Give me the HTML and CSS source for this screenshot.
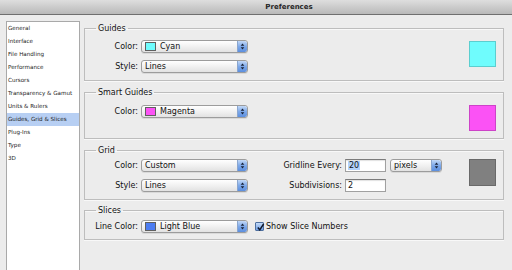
FILE: index.html
```html
<!DOCTYPE html>
<html>
<head>
<meta charset="utf-8">
<title>Preferences</title>
<link rel="stylesheet" href="styles.css">
</head>
<body>
<div class="window">
  <div class="titlebar"><span class="title">Preferences</span></div>
  <div class="main">
    <ul class="sidebar">
      <li>General</li>
      <li>Interface</li>
      <li>File Handling</li>
      <li>Performance</li>
      <li>Cursors</li>
      <li>Transparency &amp; Gamut</li>
      <li>Units &amp; Rulers</li>
      <li class="selected">Guides, Grid &amp; Slices</li>
      <li>Plug-Ins</li>
      <li>Type</li>
      <li>3D</li>
    </ul>
    <div class="content">
      <fieldset class="group g-guides">
        <legend>Guides</legend>
        <div class="body">
          <div class="fields two">
            <span class="lbl">Color:</span>
            <div class="popup"><span class="chip cyan"></span><span class="ptext">Cyan</span><span class="arrows"><svg viewBox="0 0 10 11"><path d="M3 4.6 L5 2.2 L7 4.6Z M3 6.4 L5 8.8 L7 6.4Z"/></svg></span></div>
            <span class="lbl">Style:</span>
            <div class="popup"><span class="ptext">Lines</span><span class="arrows"><svg viewBox="0 0 10 11"><path d="M3 4.6 L5 2.2 L7 4.6Z M3 6.4 L5 8.8 L7 6.4Z"/></svg></span></div>
          </div>
          <div class="swatch cyan sw-guides"></div>
        </div>
      </fieldset>

      <fieldset class="group g-smart">
        <legend>Smart Guides</legend>
        <div class="body">
          <div class="fields two">
            <span class="lbl">Color:</span>
            <div class="popup"><span class="chip magenta"></span><span class="ptext">Magenta</span><span class="arrows"><svg viewBox="0 0 10 11"><path d="M3 4.6 L5 2.2 L7 4.6Z M3 6.4 L5 8.8 L7 6.4Z"/></svg></span></div>
          </div>
          <div class="swatch magenta"></div>
        </div>
      </fieldset>

      <fieldset class="group g-grid">
        <legend>Grid</legend>
        <div class="body">
          <div class="fields five">
            <span class="lbl">Color:</span>
            <div class="popup"><span class="ptext">Custom</span><span class="arrows"><svg viewBox="0 0 10 11"><path d="M3 4.6 L5 2.2 L7 4.6Z M3 6.4 L5 8.8 L7 6.4Z"/></svg></span></div>
            <span class="lbl">Gridline Every:</span>
            <div class="field"><span class="sel">20</span></div>
            <div class="popup small"><span class="ptext">pixels</span><span class="arrows"><svg viewBox="0 0 10 11"><path d="M3 4.6 L5 2.2 L7 4.6Z M3 6.4 L5 8.8 L7 6.4Z"/></svg></span></div>
            <span class="lbl">Style:</span>
            <div class="popup"><span class="ptext">Lines</span><span class="arrows"><svg viewBox="0 0 10 11"><path d="M3 4.6 L5 2.2 L7 4.6Z M3 6.4 L5 8.8 L7 6.4Z"/></svg></span></div>
            <span class="lbl">Subdivisions:</span>
            <div class="field">2</div>
          </div>
          <div class="swatch gray"></div>
        </div>
      </fieldset>

      <fieldset class="group g-slices">
        <legend>Slices</legend>
        <div class="body">
          <div class="fields slices">
            <span class="lbl">Line Color:</span>
            <div class="popup"><span class="chip lightblue"></span><span class="ptext">Light Blue</span><span class="arrows"><svg viewBox="0 0 10 11"><path d="M3 4.6 L5 2.2 L7 4.6Z M3 6.4 L5 8.8 L7 6.4Z"/></svg></span></div>
            <label class="checkrow"><span class="check"><svg viewBox="0 0 9 9"><path d="M1.8 4.4 L3.8 6.8 L7.6 1" /></svg></span>Show Slice Numbers</label>
          </div>
        </div>
      </fieldset>
    </div>
  </div>
</div>
</body>
</html>
```
FILE: styles.css
```css
* { box-sizing: border-box; }
html, body { margin: 0; padding: 0; }
body {
  width: 512px;
  height: 270px;
  overflow: hidden;
  background: #ececec;
  font-family: "DejaVu Sans", "Liberation Sans", sans-serif;
  font-size: 8px;
  color: #111;
}
.window {
  height: 270px;
  display: flex;
  flex-direction: column;
}
.titlebar {
  height: 15px;
  flex: none;
  background: linear-gradient(#dedede, #b9b9b9);
  border-bottom: 1px solid #6f6f6f;
  padding-left: 66px;
  text-align: center;
  line-height: 14px;
}
.title {
  font-weight: bold;
  font-size: 7px;
  color: #262626;
}
.main {
  flex: 1;
  display: flex;
  align-items: stretch;
}
.sidebar {
  list-style: none;
  margin: 6px 0 -4px 6px;
  padding: 0;
  width: 74px;
  background: #fff;
  border: 1px solid #a9a9a9;
  font-size: 5.6px;
  color: #222;
}
.sidebar li {
  height: 13px;
  line-height: 13px;
  padding-left: 1px;
  white-space: nowrap;
}
.sidebar li.selected { background: #b7cff3; }
.content {
  margin-left: 4px;
  width: 420px;
  padding-top: 8px;
}
.group {
  margin: 0;
  min-width: 0;
  border: 1px solid #bdbdbd;
  box-shadow: 0 1px 0 #f8f8f8, inset 0 1px 0 #f8f8f8;
  padding: 0 7px 7px 0;
}
.group legend {
  margin-left: 11px;
  padding: 0 2px;
  font-size: 8px;
  line-height: 11px;
  color: #111;
}
.g-guides { padding-top: 6px; }
.g-smart { margin-top: 6px; padding-top: 7px; }
.g-grid { margin-top: 6px; padding-top: 3px; }
.g-slices { margin-top: 5px; padding-top: 4px; padding-bottom: 6px; }
.body {
  display: flex;
  align-items: flex-start;
}
.fields {
  display: grid;
  column-gap: 3px;
  row-gap: 7px;
  align-items: center;
}
.fields.two { grid-template-columns: 53px 107px; }
.fields.five { grid-template-columns: 53px 107px 91px 41px 53px; }
.fields.slices { grid-template-columns: 53px 107px auto; }
.lbl {
  text-align: right;
  white-space: nowrap;
  line-height: 13px;
}
.popup {
  height: 13px;
  display: flex;
  align-items: center;
  border: 1px solid #9c9c9c;
  border-radius: 3px;
  background: linear-gradient(#ffffff, #f1f1f1 50%, #e2e2e2);
  box-shadow: 0 1px 0 rgba(0,0,0,0.08);
  padding-left: 3px;
  overflow: hidden;
  white-space: nowrap;
}
.fields.five .popup.small { margin-left: 1px; }
.ptext { line-height: 11px; }
.chip {
  width: 11px;
  height: 9px;
  border: 1px solid #5f5f5f;
  margin-right: 4px;
  flex: none;
}
.arrows {
  margin-left: auto;
  width: 10px;
  height: 11px;
  flex: none;
  background: linear-gradient(#c3d9f7, #7ea9e9 50%, #5c8fdf);
  border-left: 1px solid #8aa6cf;
  border-radius: 0 2px 2px 0;
  display: flex;
}
.arrows svg { width: 10px; height: 11px; fill: #182238; }
.cyan { background: #6ffcfd; }
.magenta { background: #fb52f5; }
.lightblue { background: #4d7df2; }
.gray { background: #808080; }
.swatch {
  margin-left: auto;
  width: 27px;
  height: 26px;
  border: 1px solid rgba(0,0,0,0.18);
  flex: none;
}
.swatch.sw-guides { margin-top: 1px; }
.swatch.gray { height: 27px; }
.field {
  height: 13px;
  background: #fff;
  border: 1px solid #a0a0a0;
  border-top-color: #7b7b7b;
  box-shadow: inset 0 1px 1px rgba(0,0,0,0.12);
  padding-left: 2px;
  line-height: 11px;
}
.sel { background: #b3d2fb; padding: 0 1px; }
.checkrow {
  display: flex;
  align-items: center;
  margin-left: 4px;
  white-space: nowrap;
  line-height: 13px;
}
.check {
  width: 9px;
  height: 9px;
  margin-right: 2px;
  border: 1px solid #4e6f9f;
  border-radius: 1px;
  background: linear-gradient(#c4dbf8, #6f9ee6);
  display: flex;
}
.check svg {
  width: 9px;
  height: 9px;
  fill: none;
  stroke: #10192b;
  stroke-width: 1.5;
  overflow: visible;
}
```
